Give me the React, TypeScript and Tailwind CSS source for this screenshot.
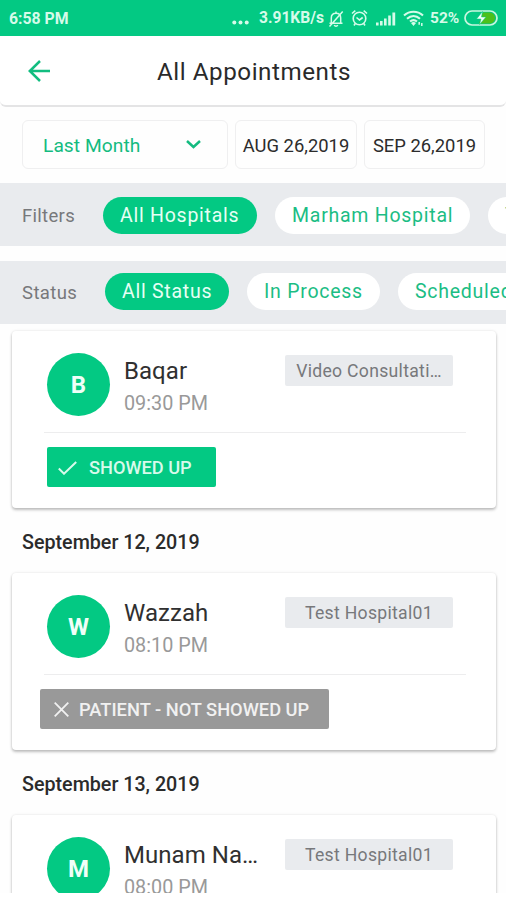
import React from "react";
import clsx from "clsx";

type Appointment = {
  name: string;
  time: string;
  place: string;
  showedUp?: boolean;
  date?: string;
};

const appointments: Appointment[] = [
  { name: "Baqar", time: "09:30 PM", place: "Video Consultati…", showedUp: true },
  { name: "Wazzah", time: "08:10 PM", place: "Test Hospital01", date: "September 12, 2019" },
  { name: "Munam Na…", time: "08:00 PM", place: "Test Hospital01", date: "September 13, 2019" },
];

const StatusBar = () => {
  return (
    <div className="flex h-9 shrink-0 items-center bg-[#03c983] pr-2 pl-[9px] pt-0.5 text-[#d5fbe9]">
      <p className="text-[15.8px] font-bold whitespace-nowrap">6:58 PM</p>
      <svg className="mt-1.5 mr-[10px] ml-auto" width="17" height="5" viewBox="0 0 17 5" fill="currentColor">
        <circle cx="2.3" cy="2.5" r="2" />
        <circle cx="8.5" cy="2.5" r="2" />
        <circle cx="14.7" cy="2.5" r="2" />
      </svg>
      <p className="w-[65px] text-[15.6px] font-bold whitespace-nowrap">3.91KB/s</p>
      <svg className="-mt-px ml-1" width="16" height="18" viewBox="0 0 16 18" fill="none" stroke="currentColor" strokeWidth="1.5">
        <path d="M1.5 13.2h13M3.3 13V8c0-3 1.7-4.8 4.7-4.8s4.7 1.8 4.7 4.8v5M6.2 15.2c.8 1.3 2.8 1.3 3.6 0M8 1.5v1.7M14.7 1.5L1.5 16.5" />
      </svg>
      <svg className="-mt-0.5 ml-[7px]" width="17" height="18" viewBox="0 0 17 18" fill="none" stroke="currentColor" strokeWidth="1.6">
        <circle cx="8.5" cy="9.5" r="6.3" />
        <path d="M1 4.5L4.3 1.7M16 4.5l-3.3-2.8M5.5 8.5l3 2.5 3.2-2.5M4.3 14.5L3 16.5M12.7 14.5l1.3 2" />
      </svg>
      <svg className="-mt-px ml-2" width="20" height="14" viewBox="0 0 20 14" fill="currentColor">
        <rect x="0" y="10.5" width="2.6" height="3" />
        <rect x="4" y="9" width="2.6" height="4.5" />
        <rect x="8" y="6.5" width="2.6" height="7" />
        <rect x="12.2" y="3.5" width="2.6" height="10" />
        <rect x="16.4" y="0.5" width="2.8" height="13" />
      </svg>
      <svg className="-mt-px ml-[7px]" width="22" height="17" viewBox="0 0 22 17" fill="none" stroke="currentColor" strokeWidth="2.1">
        <path d="M1 5.5c5.500-5 13.500-5 19 0M4 8.700c4-3.500 9-3.500 13 0M7 11.500c2.200-1.800 4.800-1.800 7 0" />
        <path d="M10.5 16l-2.500-3c1.500-1.200 3.500-1.200 5 0z" fill="currentColor" stroke="none" />
        <path d="M16.2 12v2.8M18.8 13v3" strokeWidth="1.5" />
      </svg>
      <p className="ml-[5px] w-[30px] text-[15.5px] font-bold whitespace-nowrap">52%</p>
      <svg className="-mt-0.5 ml-1" width="34" height="16" viewBox="0 0 34 16">
        <path d="M19 2.5h6.500a5.500 5.500 0 0 1 0 11H15z" fill="#4cc01c" />
        <rect x="1" y="1" width="32" height="14" rx="7" fill="none" stroke="#c9f6df" strokeWidth="1.7" />
        <path d="M18.5 1.5l-6 7.500h4.500l-1.500 5.500 6.500-7.500h-4.500z" fill="#f2fff8" stroke="#03c983" strokeWidth="0.5" />
      </svg>
    </div>
  );
};

const Header = () => {
  return (
    <div className="flex h-[71px] shrink-0 items-center rounded-b-[6px] border-b-2 border-[#e4e4e5] bg-white">
      <svg className="ml-7 shrink-0" width="23" height="22" viewBox="0 0 23 22" fill="none" stroke="#12bd80" strokeWidth="2.5">
        <path d="M22 11H2M12 1L1.800 11 12 21" />
      </svg>
      <h1 className="ml-[106px] pt-[3px] text-[24.2px] tracking-[0.55px] whitespace-nowrap text-[#2a2a2a]">All Appointments</h1>
    </div>
  );
};

const DateBox = ({ children }: { children: React.ReactNode }) => {
  return (
    <div className="flex h-[49px] items-center justify-center rounded-[6px] border-[1.5px] border-[#efeff0] pt-0.5 text-[18.4px] whitespace-nowrap text-[#2c2c2c]">
      {children}
    </div>
  );
};

const DateRow = () => {
  return (
    <div className="mt-[13px] grid shrink-0 grid-cols-[206px_122px_121px] gap-[7px] pl-[22px]">
      <div className="flex h-[49px] items-center justify-between rounded-[6px] border-[1.5px] border-[#efeff0] pt-[3px] pr-[26px] pl-5 text-[19.2px] tracking-[0.05px] text-[#14bb80]">
        Last Month
        <svg className="-mt-1" width="15" height="9" viewBox="0 0 15 9" fill="none" stroke="currentColor" strokeWidth="2.5">
          <path d="M1 1l6.5 6L14 1" />
        </svg>
      </div>
      <DateBox>AUG 26,2019</DateBox>
      <DateBox>SEP 26,2019</DateBox>
    </div>
  );
};

const Pill = ({ text, active, className }: { text: string; active?: boolean; className: string }) => {
  return (
    <div
      className={clsx(
        "flex h-[37px] shrink-0 items-center rounded-full pl-[17px] text-[19.5px] tracking-[0.75px] whitespace-nowrap",
        active ? "bg-[#03c983] text-[#e6fff4]" : "bg-white text-[#1bbd84]",
        className
      )}
    >
      {text}
    </div>
  );
};

const Tag = ({ text }: { text: string }) => {
  return (
    <div className="mt-6 mr-[43px] ml-auto flex h-[31px] w-[168px] items-center justify-center rounded-[2px] bg-[#e9ebee] pt-0.5 text-[17.6px] tracking-[0.3px] whitespace-nowrap text-[#77787b]">
      {text}
    </div>
  );
};

const Card = ({ item }: { item: Appointment }) => {
  return (
    <div className="mr-[10px] ml-3 flex h-[177px] shrink-0 flex-col rounded-[4px] bg-white shadow-[0_2px_3px_rgba(0,0,0,0.24),0_0_3px_rgba(0,0,0,0.10)]">
      <div className="flex h-[101px] shrink-0">
        <div className="mt-[22px] ml-[35px] flex size-[63px] shrink-0 items-center justify-center rounded-full bg-[#03c983] pt-px text-[24px] font-bold text-[#effff8]">
          {item.name[0]}
        </div>
        <div className="mt-6 ml-[14px] whitespace-nowrap">
          <p className="text-[24px] leading-8 tracking-[0.05px] text-[#303030]">{item.name}</p>
          <p className="pt-px text-[19.8px] leading-8 text-[#999]">{item.time}</p>
        </div>
        <Tag text={item.place} />
      </div>
      <div className="mr-[30px] ml-8 h-px shrink-0 bg-[#ededee]" />
      {item.showedUp ? (
        <div className="mt-3.5 ml-[35px] flex h-10 w-[168.5px] shrink-0 items-center rounded-[2px] bg-[#03c983] pt-0.5 pl-3 text-[18.2px] font-medium whitespace-nowrap text-[#d8faeb]">
          <svg className="mr-3 -ml-px" width="19" height="14" viewBox="0 0 19 14" fill="none" stroke="currentColor" strokeWidth="2">
            <path d="M0.8 7.5l5.200 5.200L18.200 1" />
          </svg>
          SHOWED UP
        </div>
      ) : (
        <div className="mt-3.5 ml-7 flex h-[39.5px] w-[289px] shrink-0 items-center rounded-[2px] bg-[#999] pt-0.5 pl-3.5 text-[18.3px] font-medium whitespace-nowrap text-[#f1f1f1]">
          <svg className="mr-[10px]" width="15" height="15" viewBox="0 0 15 15" fill="none" stroke="currentColor" strokeWidth="1.8">
            <path d="M0.7 0.7l13.600 13.600M14.300 0.700L0.700 14.300" />
          </svg>
          PATIENT - NOT SHOWED UP
        </div>
      )}
    </div>
  );
};

const App = () => {
  return (
    <div className="h-[900px] w-[506px] overflow-hidden bg-white font-['Roboto',sans-serif]">
      <div className="flex h-[893px] flex-col overflow-hidden bg-[#fefefe]">
        <StatusBar />
        <Header />
        <DateRow />
        <div className="mt-3.5 flex h-[63px] shrink-0 overflow-hidden bg-[#e9ebee]">
          <p className="mt-5 w-[103px] shrink-0 pl-[22px] text-[18.5px] tracking-[0.3px] text-[#77787b]">Filters</p>
          <div className="mt-3.5 flex gap-[18px]">
            <Pill text="All Hospitals" active className="w-[154px]" />
            <Pill text="Marham Hospital" className="w-[195px]" />
            <Pill text="Test Hospital01" className="w-[190px]" />
          </div>
        </div>
        <div className="mt-[15px] flex h-[63px] shrink-0 overflow-hidden bg-[#e9ebee]">
          <p className="mt-[19px] w-[105px] shrink-0 pl-[22px] text-[18.5px] tracking-[0.4px] text-[#77787b]">Status</p>
          <div className="mt-3 flex gap-[18px]">
            <Pill text="All Status" active className="w-[124px]" />
            <Pill text="In Process" className="w-[133px]" />
            <Pill text="Scheduled" className="w-[130px]" />
          </div>
        </div>
        <div className="flex flex-col pt-[7px]">
          {appointments.map((item) => (
            <React.Fragment key={item.name}>
              {item.date && (
                <p className="flex h-[65px] shrink-0 items-center pt-[5px] pl-[22px] text-[19.7px] font-medium text-[#2b2b2b]">
                  {item.date}
                </p>
              )}
              <Card item={item} />
            </React.Fragment>
          ))}
        </div>
      </div>
    </div>
  );
};

export default App;
